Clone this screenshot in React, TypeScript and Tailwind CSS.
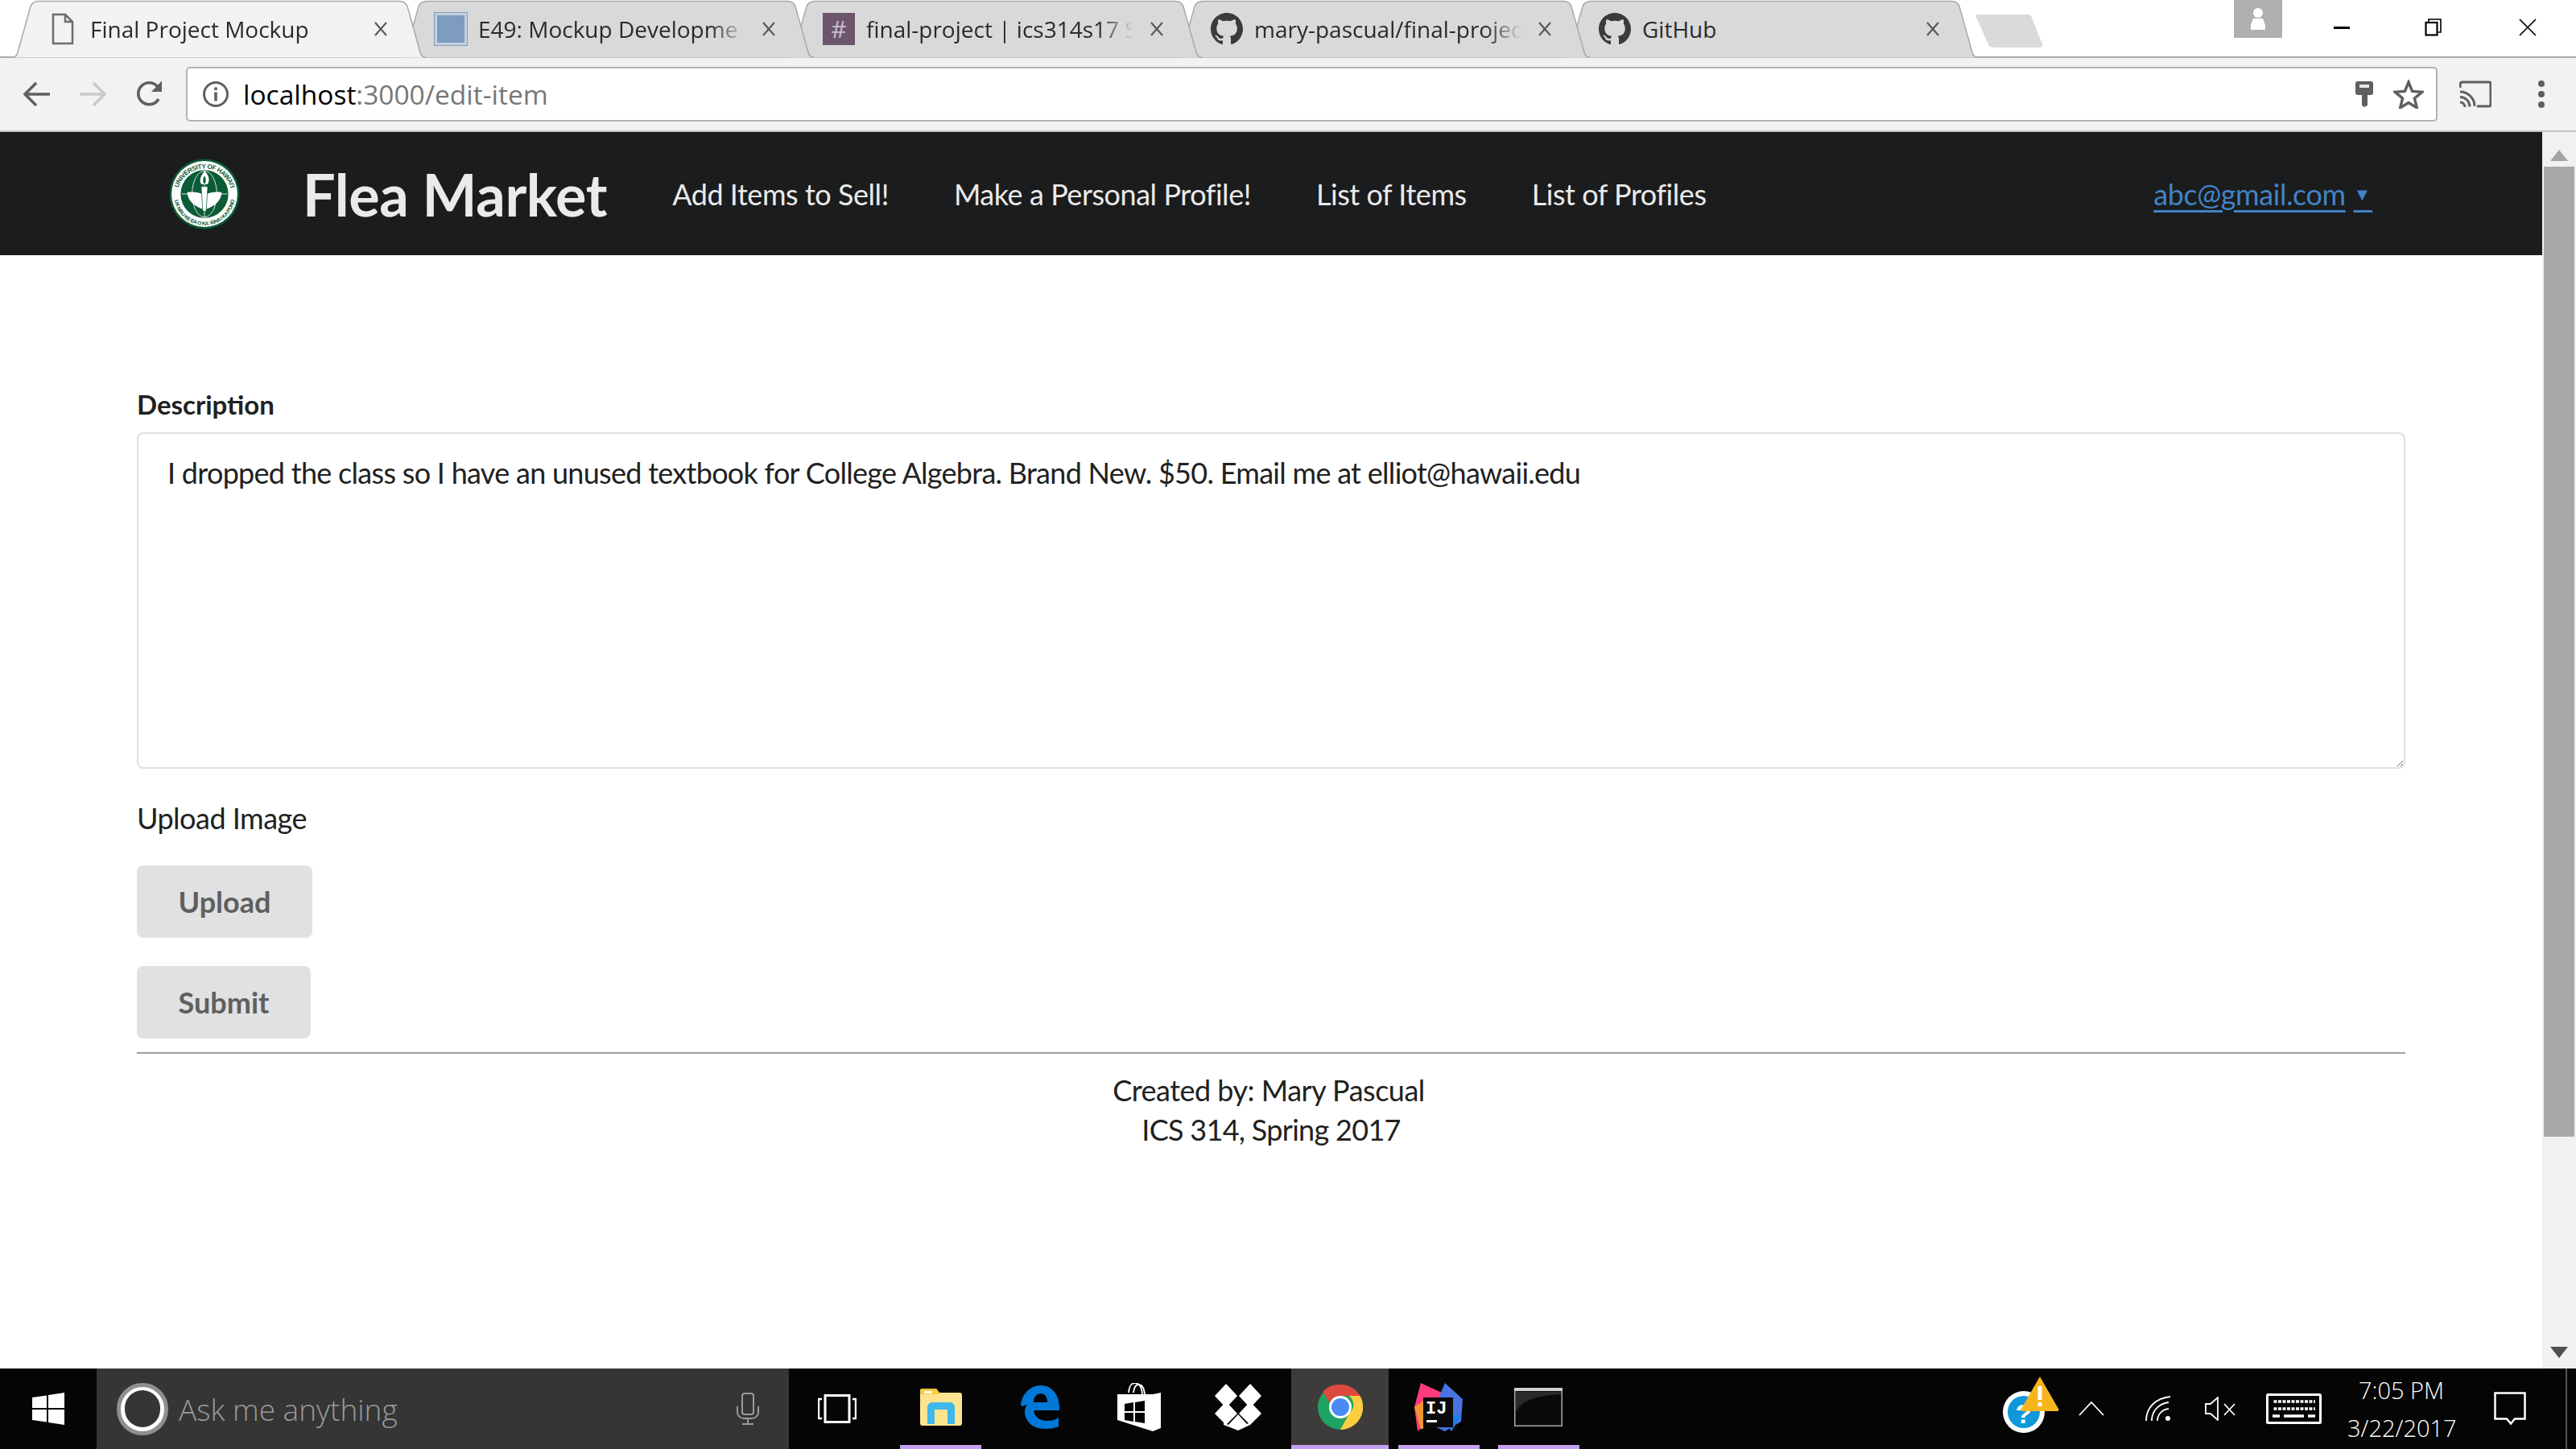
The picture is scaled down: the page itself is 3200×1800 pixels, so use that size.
const tabs = [
  { title: "Final Project Mockup", icon: "page", active: true, z: "z-[6]" },
  { title: "E49: Mockup Developme", icon: "square", z: "z-[5]" },
  { title: "final-project | ics314s17 S", icon: "slack", z: "z-[4]" },
  { title: "mary-pascual/final-projec", icon: "github", z: "z-[3]" },
  { title: "GitHub", icon: "github", noFade: true, z: "z-[2]" },
];

function GithubMark() {
  return (
    <svg width="40" height="40" viewBox="0 0 16 16" className="shrink-0" fill="#3b3b3b">
      <path d="M8 0C3.58 0 0 3.58 0 8c0 3.540 2.290 6.530 5.470 7.590.4.070.55-.17.55-.38 0-.19-.01-.82-.01-1.490-2.010.37-2.530-.49-2.690-.94-.09-.23-.48-.94-.82-1.130-.28-.15-.68-.52-.01-.53.63-.01 1.080.58 1.230.82.72 1.210 1.870.87 2.330.66.070-.52.28-.87.51-1.070-1.780-.2-3.640-.89-3.640-3.950 0-.87.31-1.590.82-2.150-.08-.2-.36-1.020.08-2.120 0 0 .67-.21 2.200.82.64-.18 1.320-.27 2-.27s1.360.09 2 .27c1.530-1.040 2.200-.82 2.200-.82.44 1.100.16 1.920.08 2.120.51.56.82 1.270.82 2.150 0 3.070-1.870 3.750-3.650 3.950.29.25.54.73.54 1.480 0 1.070-.01 1.930-.01 2.200 0 .21.15.46.55.38A8.010 8.010 0 0 0 16 8c0-4.420-3.580-8-8-8z" />
    </svg>
  );
}

function TabIcon({ kind }: { kind: string }) {
  if (kind === "page") {
    return (
      <svg width="40" height="40" viewBox="0 0 40 40" className="shrink-0">
        <path d="M8 2h15l9 9v27H8z M23 2v9h9" fill="none" stroke="#6b6b6b" strokeWidth="2.5" />
      </svg>
    );
  }
  if (kind === "square") {
    return (
      <div className="w-[40px] h-[40px] shrink-0 bg-[#7e9cbd] border-[3px] border-[#c3d0de] outline outline-1 outline-[#7e9cbd]" />
    );
  }
  if (kind === "slack") {
    return (
      <div className="w-[40px] h-[40px] shrink-0 bg-[#6b566c] flex items-center justify-center text-[#cdbccf] text-[30px] font-['Open_Sans',sans-serif] leading-none">
        #
      </div>
    );
  }
  return <GithubMark />;
}

function Tab({ title, icon, active, noFade, first, z }: { title: string; icon: string; active?: boolean; noFade?: boolean; first?: boolean; z: string }) {
  return (
    <div className={`relative w-[516px] h-[72px] shrink-0 flex items-center ${first ? "" : "-ml-[34px]"} ${z}`}>
      <svg width="516" height="72" viewBox="0 0 516 72" className="absolute left-0 top-0">
        <path
          d="M0 71.5 C4 71.5 7 69 8 65 L24 8 C26 3 29 1.5 34 1.5 H482 C487 1.5 490 3 492 8 L508 65 C509 69 512 71.5 516 71.5"
          fill={active ? "#f2f2f2" : "#d9d9d9"}
          stroke="#a9a9a9"
          strokeWidth="1.5"
        />
      </svg>
      <div className="relative flex items-center w-full h-full pl-[44px]">
        <TabIcon kind={icon} />
        <span
          className={`ml-[14px] w-[346px] whitespace-nowrap text-[28px] leading-[40px] text-[#2a2a2a] font-['Open_Sans',sans-serif] ${
            noFade ? "" : "[mask-image:linear-gradient(to_right,black_288px,transparent_332px)]"
          }`}
        >
          {title}
        </span>
        <svg width="18" height="18" viewBox="0 0 18 18" className="ml-[6px] shrink-0">
          <path d="M2 1l14 16M16 1L2 17" stroke="#5a5a5a" strokeWidth="2.2" />
        </svg>
      </div>
    </div>
  );
}

function ChromeBar() {
  return (
    <>
      {/* tab strip */}
      <div className="relative h-[72px] bg-white flex items-start pl-[14px] shrink-0">
        <div className="absolute left-0 right-0 bottom-0 h-[2px] bg-[#a9a9a9]" />
        {tabs.map((t, i) => (
          <Tab key={t.title} first={i === 0} title={t.title} icon={t.icon} active={t.active} noFade={t.noFade} z={t.z} />
        ))}
        <svg width="84" height="42" viewBox="0 0 84 42" className="ml-[-4px] mt-[18px] shrink-0 relative">
          <path d="M3 0h61c3 0 5 1 6 4l13 33c1 3-1 4-4 4H22c-3 0-5-1-6-4L1 4C0 1 1 0 3 0z" fill="#dadada" />
        </svg>
        <div className="ml-auto flex h-[47px] shrink-0 relative">
          <div className="w-[60px] h-[47px] bg-[#b0b0b0] flex items-center justify-center">
            <svg width="22" height="32" viewBox="0 0 22 32">
              <circle cx="11" cy="8" r="6" fill="#fff" />
              <path d="M5 15h12l3 8v6H2v-6z" fill="#fff" />
            </svg>
          </div>
          <div className="flex items-start pl-[64px] pr-[49px]">
            <div className="w-[20px] h-[2.5px] bg-black mt-[33px]" />
            <svg width="22" height="22" viewBox="0 0 22 22" className="ml-[93px] mt-[23px]">
              <path d="M5 5V1h15v16h-4" fill="none" stroke="#000" strokeWidth="1.6" />
              <rect x="1.5" y="5" width="14" height="15.5" fill="none" stroke="#000" strokeWidth="2.2" />
            </svg>
            <svg width="22" height="22" viewBox="0 0 22 22" className="ml-[95px] mt-[23px]">
              <path d="M1 1l20 20M21 1L1 21" stroke="#000" strokeWidth="1.7" />
            </svg>
          </div>
        </div>
      </div>

      {/* toolbar */}
      <div className="h-[92px] bg-[#f2f2f2] border-b-2 border-[#c4c4c4] flex items-center shrink-0 relative">
        <svg width="36" height="32" viewBox="0 0 36 32" className="ml-[28px] shrink-0">
          <path d="M34 16H4M17 2L3 16l14 14" fill="none" stroke="#5f5f5f" strokeWidth="3.5" />
        </svg>
        <svg width="36" height="32" viewBox="0 0 36 32" className="ml-[33px] shrink-0">
          <path d="M2 16h30M19 2l14 14-14 14" fill="none" stroke="#c9c9c9" strokeWidth="3.5" />
        </svg>
        <svg width="36" height="36" viewBox="0 0 36 36" className="ml-[35px] shrink-0">
          <path d="M29 24A13.5 13.5 0 1 1 28 9" fill="none" stroke="#5f5f5f" strokeWidth="3.6" />
          <path d="M33 1.5V15H20z" fill="#5f5f5f" />
        </svg>
        <div className="ml-[27px] w-[2797px] h-[68px] -mt-[14px] translate-y-[7px] bg-white border-2 border-[#b4b4b4] rounded-[5px] flex items-center shrink-0">
          <svg width="34" height="34" viewBox="0 0 34 34" className="ml-[18px] shrink-0">
            <circle cx="17" cy="17" r="14.5" fill="none" stroke="#5f5f5f" strokeWidth="3" />
            <rect x="15.2" y="14.5" width="3.6" height="11" fill="#5f5f5f" />
            <rect x="15.2" y="8.5" width="3.6" height="3.6" fill="#5f5f5f" />
          </svg>
          <div className="ml-[17px] text-[33.5px] leading-[44px] font-['Open_Sans',sans-serif] text-[#777]">
            <span className="text-black">localhost</span>:3000/edit-item
          </div>
          <svg width="22" height="32" viewBox="0 0 22 32" className="ml-auto shrink-0">
            <path d="M3 0h16a3 3 0 0 1 3 3v11a3 3 0 0 1-3 3h-4v13l-4 2-3-2V17H3a3 3 0 0 1-3-3V3a3 3 0 0 1 3-3z" fill="#5f5f5f" />
            <rect x="5" y="4" width="12" height="4" fill="#e8e8e8" />
          </svg>
          <svg width="38" height="36" viewBox="0 0 38 36" className="ml-[25px] mr-[15px] shrink-0">
            <path d="M19 3l4.6 11.4 12.2.9-9.4 7.8 3 11.9L19 28.5 8.600 35l3-11.900-9.400-7.800 12.200-.9z" fill="none" stroke="#5f5f5f" strokeWidth="3.4" />
          </svg>
        </div>
        <svg width="40" height="34" viewBox="0 0 40 34" className="ml-[27px] shrink-0">
          <path d="M1 9V5a3 3 0 0 1 3-3h33a2 2 0 0 1 2 2v26a2 2 0 0 1-2 2H22" fill="none" stroke="#5f5f5f" strokeWidth="3" />
          <path d="M1 14a18 18 0 0 1 18 18M1 20.500a12 12 0 0 1 12 12M1 27a6 6 0 0 1 6 6" fill="none" stroke="#5f5f5f" strokeWidth="3" />
        </svg>
        <div className="ml-[58px] flex flex-col gap-[5px] shrink-0">
          <div className="w-[8px] h-[8px] rounded-full bg-[#5f5f5f]" />
          <div className="w-[8px] h-[8px] rounded-full bg-[#5f5f5f]" />
          <div className="w-[8px] h-[8px] rounded-full bg-[#5f5f5f]" />
        </div>
      </div>
    </>
  );
}

function Seal() {
  return (
    <svg width="88" height="88" viewBox="0 0 86 86" className="shrink-0">
      <circle cx="43" cy="43" r="42.5" fill="#0b5b36" />
      <circle cx="43" cy="43" r="40" fill="#fff" />
      <circle cx="43" cy="43" r="29" fill="#0b5b36" />
      <defs>
        <path id="sealTop" d="M10 45a33 33 0 0 1 66 0" />
        <path id="sealBottom" d="M6 44a37 37 0 0 0 74 0" />
      </defs>
      <text fontSize="8" fontWeight="700" fill="#0b5b36" fontFamily="'Liberation Sans',sans-serif">
        <textPath href="#sealTop" startOffset="50%" textAnchor="middle">UNIVERSITY OF HAWAI'I</textPath>
      </text>
      <text fontSize="6.4" fontWeight="700" fill="#0b5b36" fontFamily="'Liberation Sans',sans-serif">
        <textPath href="#sealBottom" startOffset="50%" textAnchor="middle">UA MAU KE EA O KA ʻĀINA I KA PONO</textPath>
      </text>
      <ellipse cx="43" cy="43" rx="15" ry="28" fill="none" stroke="#fff" strokeWidth="0.8" />
      <path d="M15 43h56M43 15v56" stroke="#fff" strokeWidth="0.8" />
      <path d="M22 41c8-1 16 0 21 4 5-4 13-5 21-4-1 11-10 18-21 21-11-3-20-10-21-21z" fill="#fff" />
      <path d="M39 34h8l-2 30h-4z" fill="#fff" stroke="#0b5b36" strokeWidth="0.7" />
      <path d="M43 15c5 5 7 10 4 16h-8c-3-6 0-10 4-16z" fill="#fff" />
      <path d="M43 21c2 3 2 6 1 9h-2c-1-3-1-6 1-9z" fill="#0b5b36" />
    </svg>
  );
}

function Navbar() {
  return (
    <div className="h-[153px] bg-[#1b1c1d] flex items-center pl-[210px] gap-[81px] text-[#eaeaea] font-['Lato',sans-serif] text-[36px] tracking-[-0.45px] shrink-0">
      <Seal />
      <div className="text-[72px] font-bold leading-none tracking-[-0.4px] -ml-[3px]">Flea Market</div>
      <div>Add Items to Sell!</div>
      <div>Make a Personal Profile!</div>
      <div>List of Items</div>
      <div>List of Profiles</div>
      <div className="ml-auto mr-[211px] text-[#4183c4] underline decoration-[3px] underline-offset-[6px] whitespace-nowrap">
        abc@gmail.com<span className="ml-[10px] text-[22px] align-[6px]">▼</span>
        <span className="text-[10px]">&nbsp;</span>
      </div>
    </div>
  );
}

function Scrollbar() {
  return (
    <div className="w-[42px] bg-[#f1f1f1] flex flex-col items-center shrink-0">
      <svg width="22" height="14" viewBox="0 0 22 14" className="mt-[22px] shrink-0">
        <path d="M11 0l11 14H0z" fill="#a3a3a3" />
      </svg>
      <div className="w-[38px] h-[1205px] bg-[#a8a8a8] mt-[7px] shrink-0" />
      <div className="flex-1" />
      <svg width="22" height="14" viewBox="0 0 22 14" className="mb-[13px] shrink-0">
        <path d="M0 0h22L11 14z" fill="#505050" />
      </svg>
    </div>
  );
}

function Page() {
  return (
    <div className="flex-1 flex flex-col min-w-0 bg-white pl-[170px] pr-[170px] font-['Lato',sans-serif] text-[36px] tracking-[-0.5px] text-[#212121]">
      <div className="mt-[161px] text-[33px] font-bold leading-[48px] tracking-normal">Description</div>
      <textarea
        readOnly
        defaultValue="I dropped the class so I have an unused textbook for College Algebra. Brand New. $50. Email me at elliot@hawaii.edu"
        className="mt-[11px] w-full h-[418px] shrink-0 border-2 border-[#e0e0e0] rounded-[8px] px-[36px] pt-[26px] pb-[22px] outline-none leading-[45px] tracking-[-0.72px] resize-y"
      />
      <div className="mt-[38px] leading-[46px]">Upload Image</div>
      <div className="mt-[36px] w-[218px] h-[90px] bg-[#e0e1e2] rounded-[8px] flex items-center justify-center font-bold text-[#5f5f5f] tracking-normal">
        Upload
      </div>
      <div className="mt-[35px] w-[216px] h-[90px] bg-[#e0e1e2] rounded-[8px] flex items-center justify-center font-bold text-[#5f5f5f] tracking-normal">
        Submit
      </div>
      <div className="mt-[17px] h-[2px] bg-[#a0a0a0]" />
      <div className="mt-[21px] text-center leading-[49px]">
        <div className="pr-[6px]">Created by: Mary Pascual</div>
        <div className="tracking-[-0.7px]">ICS 314, Spring 2017</div>
      </div>
    </div>
  );
}

function Slot({ children, w, bar, on }: { children: React.ReactNode; w: string; bar?: boolean; on?: boolean }) {
  return (
    <div className={`${w} h-full flex flex-col shrink-0 ${on ? "bg-[#3e3c3b]" : ""}`}>
      <div className="flex-1 flex items-center justify-center">{children}</div>
      <div className={`h-[5px] ${on ? "w-full" : "w-[101px] mx-auto"} ${bar ? "bg-[#c4a0f0]" : ""}`} />
    </div>
  );
}

function Taskbar() {
  return (
    <div className="h-[100px] bg-[#050505] flex items-stretch shrink-0 font-['Open_Sans',sans-serif]">
      <div className="w-[120px] flex items-center justify-center shrink-0">
        <svg width="40" height="40" viewBox="0 0 40 40">
          <path d="M0 6l18-2.500V19H0zM20 3l20-3v19H20zM0 21h18v15.500L0 34zM20 21h20v19l-20-3z" fill="#fff" />
        </svg>
      </div>
      <div className="w-[860px] bg-[#353535] flex items-center shrink-0">
        <div className="ml-[25px] w-[64px] h-[65px] rounded-full border-[5px] border-[#8f8f8f] bg-white flex items-center justify-center shrink-0">
          <div className="w-[44px] h-[46px] rounded-full bg-[#353535]" />
        </div>
        <div className="ml-[13px] text-[37px] text-[#9a9a9a] font-light leading-none">Ask me anything</div>
        <svg width="28" height="40" viewBox="0 0 28 40" className="ml-auto mr-[37px] shrink-0">
          <rect x="7" y="1" width="14" height="26" rx="3" fill="none" stroke="#9a9a9a" strokeWidth="2" />
          <path d="M1 17v7c0 5 4 8 8 8h10c4 0 8-3 8-8v-7M14 32v6M7 39h14" fill="none" stroke="#9a9a9a" strokeWidth="2" />
        </svg>
      </div>
      <div className="w-[120px] flex items-center justify-center shrink-0">
        <svg width="48" height="36" viewBox="0 0 48 36">
          <rect x="9" y="1.500" width="30" height="33" fill="none" stroke="#fff" strokeWidth="3" />
          <path d="M5 6H1v24h4M43 6h4v24h-4" fill="none" stroke="#fff" strokeWidth="2.400" />
        </svg>
      </div>
      <div className="w-[7px] shrink-0" />
      <Slot w="w-[123px]" bar>
        <svg width="52" height="46" viewBox="0 0 52 46">
          <path d="M0 3a3 3 0 0 1 3-3h17l4 5h25a3 3 0 0 1 3 3v35a3 3 0 0 1-3 3H3a3 3 0 0 1-3-3z" fill="#ffe48f" />
          <path d="M0 3a3 3 0 0 1 3-3h17l5 7H0z" fill="#fcc93f" />
          <rect x="5" y="3" width="10" height="3" fill="#fff" />
          <path d="M9 44V23a6 6 0 0 1 6-6h22a6 6 0 0 1 6 6v21h-9V26H18v18z" fill="#3fb8ec" />
        </svg>
      </Slot>
      <Slot w="w-[123px]">
        <svg width="50" height="54" viewBox="0 0 50 54">
          <path
            fillRule="evenodd"
            d="M1 24C3 9 14 0 26 0c14 0 24 12 23 31H17c1 9 9 13 17 13 5 0 10-1 14-4v11c-4 2-10 3-16 3C14 54 6 43 6 33c0-4 1-7 3-10-3 2-6 4-8 1zM17 21h17c0-7-3-11-8-11s-9 4-9 11z"
            fill="#0078d7"
          />
        </svg>
      </Slot>
      <Slot w="w-[123px]">
        <svg width="54" height="60" viewBox="0 0 54 60">
          <path d="M14 12C15 2 18 0 22 0s8 2 9 14M20 12C21 4 23 2 26 2s7 2 8 12" fill="none" stroke="#fff" strokeWidth="1.800" />
          <path d="M0 14l44 0 10-2v44l-10 4L0 46z" fill="#fff" />
          <path d="M9 26l11-2v11H9zM22 24l12-2v13H22zM9 37h11v11l-11-2zM22 37h12v13l-12-2z" fill="#000" />
        </svg>
      </Slot>
      <Slot w="w-[123px]">
        <svg width="60" height="58" viewBox="0 0 60 58" fill="#fff">
          <path d="M15 0l14 15-14 15L1 15zM45 0l14 15-14 15-14-15z" />
          <path d="M15 22l14 15-14 14L1 37zM45 22l14 15-14 14-14-14z" />
          <path d="M30 38l11 12 4-2v3L30 58 12 51v-3l6 3z" />
        </svg>
      </Slot>
      <div className="w-[5px] shrink-0" />
      <Slot w="w-[121px]" bar on>
        <svg width="56" height="56" viewBox="0 0 56 56">
          <circle cx="28" cy="28" r="28" fill="#1ea362" />
          <path d="M28 0a28 28 0 0 1 24.500 14H28A14 14 0 0 0 15 23L6 9A28 28 0 0 1 28 0z" fill="#db4a3d" />
          <path d="M52.500 14A28 28 0 0 1 28 56l11-20a14 14 0 0 0 0-22z" fill="#ffcd40" />
          <circle cx="28" cy="28" r="14" fill="#fff" />
          <circle cx="28" cy="28" r="11" fill="#4a8af4" />
        </svg>
      </Slot>
      <Slot w="w-[124px]" bar>
        <svg width="60" height="60" viewBox="0 0 60 60">
          <path d="M8 0l26 12L20 44 4 60 0 30z" fill="#fe3b7c" />
          <path d="M0 30l14-10 6 30-12 8z" fill="#f09432" />
          <path d="M38 0l22 20-2 28-20 12-22-10z" fill="#4a72e0" />
          <path d="M30 40h28l-12 20z" fill="#1c7fe8" />
          <rect x="11" y="18" width="37" height="37" fill="#0a0a0a" />
          <text x="14" y="38" fontSize="22" fontWeight="700" fill="#fff" fontFamily="'Liberation Mono',monospace">IJ</text>
          <rect x="15" y="46" width="13" height="3" fill="#fff" />
        </svg>
      </Slot>
      <Slot w="w-[124px]" bar>
        <svg width="60" height="48" viewBox="0 0 60 48">
          <rect x="0.750" y="0.750" width="58.500" height="46.500" fill="#0a0a0a" stroke="#a8a8a8" strokeWidth="1.500" />
          <rect x="0" y="0" width="60" height="4" fill="#cfcfcf" />
          <path d="M2 30c8-14 22-20 56-22V5H2z" fill="#2a2a2a" />
        </svg>
      </Slot>

      <div className="ml-auto flex items-center shrink-0 relative">
        <svg width="71" height="70" viewBox="0 0 71 70" className="-mt-[10px] shrink-0">
          <circle cx="27" cy="44" r="26" fill="#fff" />
          <circle cx="27" cy="44" r="20" fill="#0f97d8" />
          <text x="27" y="58" textAnchor="middle" fontSize="34" fontWeight="700" fill="#fff" fontFamily="'Liberation Sans',sans-serif">?</text>
          <path d="M47 0l23 40c1 2 0 3-2 3H26c-2 0-3-1-2-3z" fill="#f7b51d" />
          <rect x="44.500" y="12" width="5" height="17" fill="#fff" />
          <rect x="44.500" y="32" width="5" height="5" fill="#fff" />
        </svg>
        <svg width="32" height="18" viewBox="0 0 32 18" className="ml-[24px] shrink-0">
          <path d="M1 17L16 1l15 16" fill="none" stroke="#fff" strokeWidth="1.800" />
        </svg>
        <svg width="32" height="32" viewBox="0 0 32 32" className="ml-[51px] shrink-0">
          <path d="M1 31C1 15 12 3 31 1M8 31C8 19 16 10 29 8M15 31c0-7 5-14 14-15" fill="none" stroke="#fff" strokeWidth="1.800" />
          <circle cx="28" cy="28" r="3" fill="#fff" />
        </svg>
        <svg width="38" height="30" viewBox="0 0 38 30" className="ml-[42px] shrink-0">
          <path d="M1 9h6l9-8v28l-9-8H1z" fill="none" stroke="#fff" strokeWidth="1.800" />
          <path d="M24 9l13 14M37 9L24 23" stroke="#fff" strokeWidth="1.800" />
        </svg>
        <svg width="69" height="38" viewBox="0 0 69 38" className="ml-[38px] shrink-0">
          <rect x="1.500" y="1.500" width="66" height="35" rx="1" fill="none" stroke="#fff" strokeWidth="3" />
          <path d="M8 10h53M8 19h53M8 28h9M22 28h25M52 28h9" stroke="#fff" strokeWidth="3.500" />
          <path d="M8 10h53M8 19h53" stroke="#000" strokeWidth="4" strokeDasharray="1.500 4" fill="none" />
        </svg>
        <div className="ml-[32px] w-[134px] text-center text-white text-[29px] leading-[47px] whitespace-nowrap font-light">
          <div>7:05 PM</div>
          <div>3/22/2017</div>
        </div>
        <svg width="40" height="42" viewBox="0 0 40 42" className="ml-[48px] shrink-0">
          <path d="M1.500 1.500h37v32H26l-5 6-5-6H1.500z" fill="none" stroke="#fff" strokeWidth="2.500" />
        </svg>
        <div className="ml-[49px] w-[2px] self-stretch bg-[#555]" />
        <div className="w-[11px]" />
      </div>
    </div>
  );
}

export default function App() {
  return (
    <div className="w-[3200px] h-[1800px] flex flex-col overflow-hidden bg-white">
      <ChromeBar />
      <div className="flex flex-1 min-h-0">
        <div className="flex-1 flex flex-col min-w-0">
          <Navbar />
          <Page />
        </div>
        <Scrollbar />
      </div>
      <Taskbar />
    </div>
  );
}
